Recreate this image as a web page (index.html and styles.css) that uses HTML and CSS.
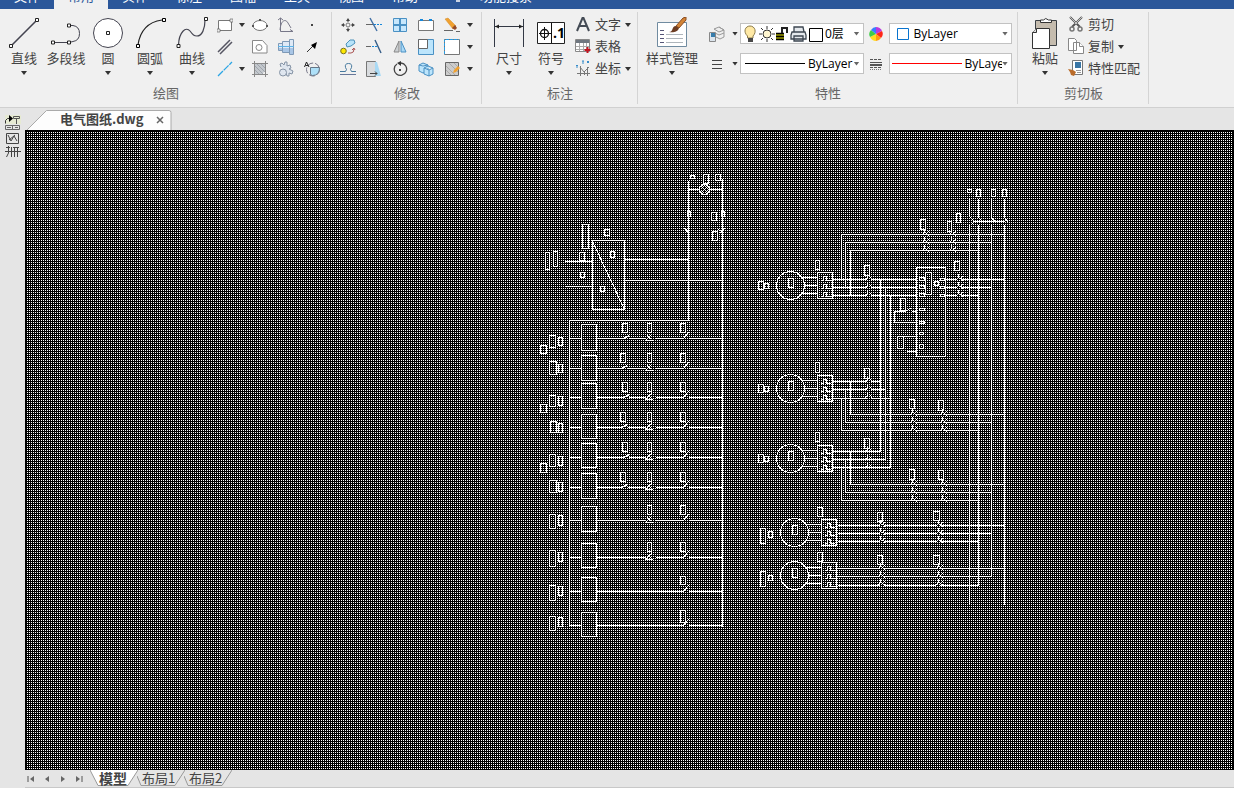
FILE: index.html
```html
<!DOCTYPE html>
<html lang="zh-CN">
<head>
<meta charset="utf-8">
<title>电气图纸.dwg</title>
<link rel="stylesheet" href="styles.css">
</head>
<body>
<nav class="menu">
  <button>文件</button><button class="current">常用</button><button>实体</button><button>标注</button><button>图幅</button><button>工具</button><button>视图</button><button>帮助</button>
  <svg width="12" height="12" viewBox="0 0 12 12"><path d="M6 1a3.500 3.500 0 0 1 2 6v3H4V7a3.500 3.500 0 0 1 2-6" fill="#c9d3e4"/></svg>
  <span>功能搜索</span>
</nav>

<header class="ribbon">
  <section class="group draw">
    <div class="tools">
      <button class="big"><svg width="32" height="32" viewBox="0 0 32 32"><path d="M4 28 28 4" stroke="#444450" stroke-width="1.600"/><path d="M1.500 27.500h3v3h-3zM27.500 1.500h3v3h-3z" fill="#fff" stroke="#222"/></svg><span>直线</span><i class="caret"></i></button>
      <button class="big"><svg width="32" height="32" viewBox="0 0 32 32" fill="none"><path d="M4 25.500h15M19 8.500h4q6.500 1 6.500 8t-6.500 8l-4 1" stroke="#444450"/><path d="M1.500 24h3v3h-3zM17.500 24h3v3h-3zM17.500 7h3v3h-3z" fill="#fff" stroke="#222"/></svg><span>多段线</span></button>
      <button class="big"><svg width="32" height="32" viewBox="0 0 32 32"><circle cx="16" cy="16" r="14.500" fill="#fff" stroke="#444450"/><path d="M14.500 14.500h3v3h-3z" fill="#fff" stroke="#222"/></svg><span>圆</span><i class="caret"></i></button>
      <button class="big"><svg width="32" height="32" viewBox="0 0 32 32" fill="none"><path d="M4 28C6 14 14 5 28 3" stroke="#222" stroke-width="1.200"/><path d="M2.500 27.500h3v3h-3zM28.500 1.500h3v3h-3z" fill="#fff" stroke="#000"/></svg><span>圆弧</span><i class="caret"></i></button>
      <button class="big"><svg width="32" height="32" viewBox="0 0 32 32" fill="none"><path d="M2.500 28C3 15 10 9 14 14c3 4 4 5 7 5 5 0 8-7 8-16" stroke="#444450" stroke-width="1.200"/><path d="M1 27.500h3v3H1zM28.500.5h3v3h-3z" fill="#fff" stroke="#222"/></svg><span>曲线</span><i class="caret"></i></button>
      <div class="grid grid-draw">
        <button><svg width="16" height="16" viewBox="0 0 16 16"><path d="M1.500 3.500h13v10h-13z" fill="#fff" stroke="#777"/><path d="M0 12h3v3H0zM13 2h3v3h-3z" fill="#eee" stroke="#555" stroke-width=".6"/></svg></button><i class="caret"></i>
        <button><svg width="16" height="16" viewBox="0 0 16 16"><ellipse cx="8" cy="8.500" rx="7" ry="5" fill="#fff" stroke="#777"/><path d="M7 2h2v2H7zM0 8h2v2H0zM14 8h2v2h-2z" fill="#555"/></svg></button>
        <button><svg width="16" height="16" viewBox="0 0 16 16" fill="none" stroke="#778"><path d="M2.500 1v13.500H15M0 3l2.500-2L5 3M2 13C3 2 8 2 10 6l3 5M12 12.500l3 2"/></svg></button>
        <button><svg width="16" height="16" viewBox="0 0 16 16"><path d="M7 7h2v2H7z" fill="#444"/></svg></button>
        <button><svg width="16" height="16" viewBox="0 0 16 16" fill="none" stroke="#555562" stroke-width="1.500"><path d="M1 13 13 1M3 15 15 3"/></svg></button><i></i>
        <button><svg width="16" height="16" viewBox="0 0 16 16" fill="#fff" stroke="#888"><path d="M.5 1.500h10l4.500 5v7.500H.5z"/><circle cx="7" cy="8.500" r="3"/></svg></button>
        <button><svg width="16" height="16" viewBox="0 0 16 16"><path d="M.5 4.500h4v7h-4zM4.500 2.500h7v11h-7zM11.500 .5h4v15h-4z" fill="#dfeaf6" stroke="#7e99b6"/><path d="M1 9h3v2H1zM5 9h6v4H5zM12 9h3v6h-3z" fill="#a9c6e6"/><path d="M0 7.500h16" stroke="#5cb3e8"/></svg></button>
        <button><svg width="16" height="16" viewBox="0 0 16 16"><path d="m3 13 6-6" stroke="#333"/><path d="m13 3-2 7-4-4z" fill="#000"/></svg></button>
        <button><svg width="16" height="16" viewBox="0 0 16 16"><path d="M1 15 15 1" stroke="#2aa5e5" stroke-width="1.300" stroke-dasharray="7 1"/></svg></button><i class="caret"></i>
        <button><svg width="16" height="16" viewBox="0 0 16 16"><path d="M3 3h10v7l-3 3H3z" fill="#c3c8cd"/><path d="M0 2.500h16M2.500 0v16M0 13.500h16M13.500 0v16" stroke="#888"/><path d="m3 5 8 8M5 3l8 8M9 3l4 4M3 9l4 4" stroke="#8f959d" stroke-width=".7"/></svg></button>
        <button><svg width="16" height="16" viewBox="0 0 16 16" fill="#dfe6ef" stroke="#8593a5"><path d="M3 6 2 3l2-1 2 2 1-3h2v4l3-1 1 3-2 1 4 2-1 3-3-1v3H9l-1-3"/><circle cx="5" cy="11.500" r="3.500"/></svg></button>
        <button><svg width="16" height="16" viewBox="0 0 16 16"><circle cx="9" cy="8.500" r="6.500" fill="none" stroke="#778" stroke-dasharray="6 2"/><path d="M6.500 6.500h9q0 8-7 8l-2-1z" fill="#aee0f8" stroke="#678"/><path d="m.5 6 2-5 2.500 5M1.500 4.500h3" fill="none" stroke="#222"/></svg></button>
      </div>
    </div>
    <h2>绘图</h2>
  </section>

  <section class="group modify">
    <div class="tools">
      <div class="grid grid-modify">
        <button><svg width="16" height="16" viewBox="0 0 16 16"><path d="M8 1 6 4h4zM8 15l-2-3h4zM1 8l3-2v4zM15 8l-3-2v4z" fill="#444"/><path d="M8 3v2M8 11v2M3 8h2M11 8h2" stroke="#444"/><circle cx="8" cy="8" r="2" fill="none" stroke="#777"/></svg></button>
        <button><svg width="16" height="16" viewBox="0 0 16 16"><path d="M0 7.500h7" stroke="#666"/><path d="M8 7.500h8" stroke="#1687d9" stroke-dasharray="2 1"/><path d="m4 1 7 13" stroke="#3f6ea3" stroke-width="1.400"/></svg></button>
        <button><svg width="16" height="16" viewBox="0 0 16 16"><path d="M1.500 1.500h13v13h-13z" fill="#c7e7fc" stroke="#4a91c4"/><path d="M8 1v14M1 8h14" stroke="#4a91c4" stroke-width="2"/></svg></button>
        <button><svg width="16" height="16" viewBox="0 0 16 16"><path d="M3 3.500H.5v10h15v-10H13M5 3.500h6" fill="#fff" stroke="#777"/><path d="M2 2h3v2H2zM11 2h3v2h-3z" fill="#1687d9"/></svg></button>
        <button><svg width="16" height="16" viewBox="0 0 16 16"><path d="m1 2 3-1 8 8-3 3z" fill="#f0a130" stroke="#d28a2a" stroke-width=".5"/><path d="m8 11 3-3 2 3-2 2z" fill="#944b28"/><path d="M0 13.500h9M12 14.500h4" stroke="#666"/></svg></button><i class="caret"></i>
        <button><svg width="16" height="16" viewBox="0 0 16 16"><circle cx="3.500" cy="12" r="2.800" fill="#ffe900" stroke="#777021"/><path d="m6 5 4-4h4l1 3-4 3-4 1z" fill="#b8e4fa" stroke="#4c92bb"/><path d="M8 14h3q3 0 3-4m-2 1 2-2 1 2" fill="none" stroke="#a55"/></svg></button>
        <button><svg width="16" height="16" viewBox="0 0 16 16"><path d="M0 7.500h5" stroke="#666"/><path d="M6 7.500h5" stroke="#1687d9" stroke-dasharray="2 1"/><path d="m9 1 6 13" stroke="#345c86" stroke-width="1.400"/></svg></button>
        <button><svg width="16" height="16" viewBox="0 0 16 16"><path d="M7 2v11H2z" fill="#cbcfd2" stroke="#888"/><path d="M9 2v11h5z" fill="#a9d8f6" stroke="#4a91c4"/></svg></button>
        <button><svg width="16" height="16" viewBox="0 0 16 16"><path d="M.5.5h15v15H.5z" fill="#bce5fc" stroke="#4a91c4"/><path d="M.5.5h9v9h-9z" fill="#fff" stroke="#666"/></svg></button>
        <button><svg width="16" height="16" viewBox="0 0 16 16"><path d="M.5.5h15v15H.5z" fill="#fff" stroke="#777"/><path d="M.5 15V.5H15" fill="none" stroke="#2b9be0" stroke-dasharray="3 1"/></svg></button><i class="caret"></i>
        <button><svg width="16" height="16" viewBox="0 0 16 16" fill="none"><path d="M0 10.500h5.500q2-2 0-4-1-4 3-4t3 4q-2 2 0 4H16" stroke="#45799e"/><path d="M0 13.500h16" stroke="#679"/></svg></button>
        <button><svg width="16" height="16" viewBox="0 0 16 16"><path d="M.5.5h9v15h-9z" fill="#d9dcdf" stroke="#777"/><path d="M9 1h2l4 14H9z" fill="#a9daf5"/><path d="M4 12.500h7m-2-2 2 2-2 2" stroke="#444" fill="none"/></svg></button>
        <button><svg width="16" height="16" viewBox="0 0 16 16" fill="none"><path d="M9 2a6.200 6.200 0 1 1-4 1" stroke="#444" stroke-width="1.300"/><path d="M9 0v5L5 2z" fill="#333"/><path d="M7 8h2v2H7z" fill="#444"/></svg></button>
        <button><svg width="16" height="16" viewBox="0 0 16 16" fill="#bce5fc" stroke="#4a91c4"><path d="m1 4 4-2 5 2v6l-5 2-4-2zM1 4l4 1 5-1"/><path d="m6 7 4-2 5 2v6l-4 2-5-2zM6 7l5 2 4-2M11 9v6"/></svg></button>
        <button><svg width="16" height="16" viewBox="0 0 16 16"><path d="M1.500 1.500h13v13h-13z" fill="#ccc" stroke="#666"/><path d="m2 5 9 9M5 2l9 9M2 9l5 5M10 2l4 4" stroke="#aaa"/><path d="m9 12 1-3 4-4 2 2-4 4z" fill="#f0a130"/></svg></button><i class="caret"></i>
      </div>
    </div>
    <h2>修改</h2>
  </section>

  <section class="group annotate">
    <div class="tools">
      <button class="big"><svg width="32" height="32" viewBox="0 0 32 32"><path d="M1.500 2v28M30.500 2v28M2 9.500h28" stroke="#333945"/><path d="m2 9.500 4-2v4zM30 9.500l-4-2v4z" fill="#222"/></svg><span>尺寸</span><i class="caret"></i></button>
      <button class="big"><svg width="32" height="32" viewBox="0 0 32 32"><path d="M2.500 5.500h27v21h-27z" fill="#fff" stroke="#222"/><path d="M16.500 6v20M4 16.500h12M9.500 10v13" stroke="#111"/><circle cx="9.500" cy="16.500" r="4" fill="none" stroke="#111" stroke-width="1.300"/><text x="18" y="21" class="one">.1</text></svg><span>符号</span><i class="caret"></i></button>
      <div class="list">
        <button><svg width="16" height="16" viewBox="0 0 16 16"><path d="m2 15 5.500-13h1L14 15M4 10h8" fill="none" stroke="#444b55" stroke-width="2"/></svg>文字<i class="caret"></i></button>
        <button><svg width="16" height="16" viewBox="0 0 16 16"><path d="M.5 1.500h14v12H.5z" fill="#fff" stroke="#888"/><path d="M1 2h13v3H1z" fill="#6f7780"/><path d="M1 8.500h13M1 11.500h13M4.500 5v8M8.500 5v8M11.500 5v8" stroke="#aaa"/><path d="M12.500 9v6M9.500 12h6" stroke="#c21420" stroke-width="2"/></svg>表格</button>
        <button><svg width="16" height="16" viewBox="0 0 16 16" fill="none"><path d="M5.500 6v10M2 13.500h13M5 7l4 5 5-5M9.500 12v3M12.500 7v9" stroke="#777"/><path d="m1 5 1 1 1-1M2 6v2M7 1h2M8 1v3M12 1l2 2M14 1l-2 2" stroke="#378cca"/></svg>坐标<i class="caret"></i></button>
      </div>
    </div>
    <h2>标注</h2>
  </section>

  <section class="group properties">
    <div class="tools">
      <button class="big wide"><svg width="32" height="32" viewBox="0 0 32 32"><path d="M1.500 5.500h29v24h-29z" fill="#fff" stroke="#708ba0"/><path d="M4 13.500h4M4 17.500h4M4 21.500h4M4 25.500h4" stroke="#557"/><path d="M10 17.500h17M10 21.500h17M10 25.500h17" stroke="#aeb5bb"/><path d="m20 9 7-8 3-1v3l-7 8z" fill="#d28436" stroke="#8c4c20"/><path d="M13 15c5 0 2-6 7-6l3 2c-1 4-6 5-10 4" fill="#6c3c22"/></svg><span>样式管理</span><i class="caret"></i></button>
      <div class="props">
        <button class="pick"><svg width="16" height="16" viewBox="0 0 16 16"><path d="m5 3 5-2 5 3-5 2zM6 7l4 2 5-2M7 11l4 2 4-2M10 1l5 3v7" fill="#eee" stroke="#999"/><path d="M.5 6.500h6v9h-6z" fill="#dce5ed" stroke="#888"/><path d="M2 7h4v4H2z" fill="#367cab"/></svg><i class="caret"></i></button>
        <div class="combo"><svg class="layer" width="82" height="18" viewBox="0 0 82 18"><path d="M4.500 11C0 7 2 1 7 1s7 6 3 10v2H4.500z" fill="#ffe9a5" stroke="#8c7c4c"/><path d="M5 13h5v4H5z" fill="#484848"/><circle cx="24" cy="9" r="4" fill="#fff6d0" stroke="#333"/><path d="M24 1v3M24 14v3M16 9h3M29 9h3M18 3l2 2M28 13l2 2M30 3l-2 2M20 13l-2 2" stroke="#333"/><path d="M33 8h8v7h-8z" fill="#999900"/><path d="M33 8.500h8M33 11.500h8M33 14.500h8" stroke="#000" stroke-width="1.500"/><path d="M39 8V3h5v5" fill="none" stroke="#222" stroke-width="2"/><path d="M51 7V2h9l1 5M49 7h13l1 3v4H48v-4zM51 11h9v5h-9z" fill="#e4e8ec" stroke="#3c4650" stroke-width="1.300"/><path d="M66.500 3.500h13v13h-13z" fill="#fff" stroke="#000"/></svg><select aria-label="图层"><option>0层</option></select><i class="caret"></i></div>
        <svg class="mid" width="14" height="14" viewBox="0 0 14 14"><path d="M7 7V0a7 7 0 0 1 6 4z" fill="#bb39dd"/><path d="m7 7 6-3q2 4-1 7z" fill="#ff2617"/><path d="m7 7 5 4q-2 3-5 3z" fill="#ff9b11"/><path d="M7 7v7q-4 0-6-4z" fill="#ffdc20"/><path d="M7 7 1 10q-2-4 1-7z" fill="#3ecd45"/><path d="M7 7 2 3q2-3 5-3z" fill="#377dff"/></svg>
        <div class="combo"><svg class="swatch" width="14" height="14" viewBox="0 0 14 14"><path d="M1.500 1.500h11v11h-11z" fill="#fff" stroke="#0873ce"/></svg><select aria-label="颜色"><option>ByLayer</option></select><i class="caret"></i></div>
        <button class="pick"><svg width="16" height="16" viewBox="0 0 16 16"><path d="M3 4.500h10M3 8.500h10M3 12.500h10" stroke="#444"/></svg><i class="caret"></i></button>
        <div class="combo"><span class="stroke black"></span><select class="line-type" aria-label="线型"><option>ByLayer</option></select><i class="caret"></i></div>
        <svg class="mid" width="14" height="14" viewBox="0 0 14 14"><path d="M1 2.500h12M1 10.500h12" stroke="#555" stroke-dasharray="3 1"/><path d="M1 5.500h12" stroke="#555"/><path d="M1 8h12" stroke="#555" stroke-width="2"/><path d="M1 12.500h12" stroke="#777" stroke-dasharray="1 1"/></svg>
        <div class="combo"><span class="stroke red"></span><select class="line-weight" aria-label="线宽"><option>ByLayer</option></select><i class="caret"></i></div>
      </div>
    </div>
    <h2>特性</h2>
  </section>

  <section class="group clipboard">
    <div class="tools">
      <button class="big"><svg width="32" height="32" viewBox="0 0 32 32"><path d="M6.500 3.500h21v25h-21z" fill="#c5bcae" stroke="#3b4045"/><path d="M11.500 5.500V3h3q2-3 5 0h3v2.500z" fill="#fff" stroke="#333"/><path d="m3.500 15.500 4-4h13v20h-17z" fill="#fff" stroke="#333"/><path d="M3.500 15.500h4v-4" fill="#ddd" stroke="#333"/></svg><span>粘贴</span><i class="caret"></i></button>
      <div class="list">
        <button><svg width="16" height="16" viewBox="0 0 16 16"><path d="m2 1 10 10M14 1 4 11" stroke="#555" stroke-width="2"/><path d="m2 1 7 7M14 1 7 8" stroke="#ddd" stroke-width=".8"/><circle cx="4" cy="13" r="2" fill="none" stroke="#777" stroke-width="1.500"/><circle cx="12" cy="13" r="2" fill="none" stroke="#777" stroke-width="1.500"/></svg>剪切</button>
        <button><svg width="16" height="16" viewBox="0 0 16 16" fill="#fff" stroke="#888"><path d="M.5.5h6l2 2v10h-8zM5.500 4.500h6l4 4v7h-10z"/><path d="M11.500 4.500v4h4"/></svg>复制<i class="caret"></i></button>
        <button><svg width="16" height="16" viewBox="0 0 16 16"><path d="M4.500.5h10v14h-10z" fill="#fff" stroke="#777"/><path d="M7 2h6v6H7z" fill="#3875a5"/><path d="M8 10.500h5M9 12.500h4" stroke="#999"/><path d="m0 9 5 1 3 2-2 4-3-1-1-3z" fill="#b96b29"/></svg>特性匹配</button>
      </div>
    </div>
    <h2>剪切板</h2>
  </section>
</header>

<main class="workspace">
  <aside class="rail">
    <svg width="16" height="42" viewBox="0 0 16 42" fill="none" stroke="#333"><path d="M0 0h16v9H0z" fill="#e6ead3" stroke="none"/><path d="M.5 8.500v-3l2-2H5"/><path d="M4 0v7l4-3.500z" fill="#000" stroke="none"/><path d="M8.500 1.500h6v2h-6zM11.500 4v5" stroke="#555"/><path d="M.5 10.500h14v4H.5zM2 12.500h4M10 12.500h3M7.500 11v3" stroke="#666"/><path d="M1.500 18.500h12v10h-12zM3 20l3 6 3-5 3 5M4 25l6-5" stroke="#444"/><path d="M1 32.500h4M8 32.500h6M0 36.500h16M3.500 31v7l-2 4M6.500 32v10M9.500 32v10M12.500 32v10" stroke="#444"/></svg>
  </aside>
  <div class="document">
    <div class="file-tabs">
      <div class="file-tab"><svg viewBox="0 0 146 20" preserveAspectRatio="none"><path d="M.5 20.500 20.500.5H143q2 0 2 2v18" fill="#fdfdfd" stroke="#aaa"/></svg><span>电气图纸.dwg</span><button aria-label="关闭"><svg width="8" height="8" viewBox="0 0 8 8"><path d="m1 1 6 6M7 1 1 7" stroke="#666" stroke-width="1.500"/></svg></button></div>
    </div>
    <div class="canvas">
      <svg width="1209" height="640" viewBox="24.500 129.500 1209 640" class="schematic">
        <defs>
          <g id="motor">
            <circle r="14"/>
            <path d="M-2-7h5v9h-5zM12-8h15M14 0h13M12 8h15M27-13h15v26H27zM32-9h4v4h4M30-5h3v-4M32-1h4v4h4M30 3h3v-4M32 7h4v4h4M30 11h3V7"/>
          </g>
          <path id="tag" d="M-32-4h5v8h-5zM-26-2h4v5h-4z"/>
          <path id="sw" d="M-4 0h3l6-3"/>
          <path id="xsw" d="M-5 2h8M-2 0l4-4M-2-3l4 4M-5 3l3-3"/>
          <path id="ksw" d="M-1 0l5-6"/>
          <path id="poles" d="M0-6v4l-3 3M1 0l3-3M0 2v4l-3 3M1 8l3-3M0 10v4l-3 3M1 16l3-3M4-1v2M4 7v2M4 15v2"/>
        </defs>
        <path d="M688 180v140M722 178v448M688 189h11M709 189h13M690 175h4v3h-4zM703 174h5v9h-5zM715 174h5v6h-5zM701 192l6-6M701 188l3-3M704 193l4-4M687 211h3v5h-3zM711 212h5v8h-5zM721 211h3v5h-3zM712 231h5v9h-5zM684 228l5 4M685 232l3-3M719 233l5-5M718 229l5 3"/>
        <circle cx="704" cy="189" r="5"/>
        <path d="M592 240h32v69h-32zM592 241l32 68M582 224h6v24h-6zM604 229h5v6h-5zM545 252h4v17h-4zM553 251h4v15h-4zM579 252h5v8h-5zM580 272h4v5h-4zM610 251h4v6h-4zM600 286h4v5h-4zM564 261h28M564 286h28M624 259h64M624 280h98M569 625V320h119"/>
        <path d="M581 324h15v26h-15zM581 355h15v25h-15zM581 383h15v25h-15zM581 414h15v24h-15zM581 443h15v24h-15zM581 473h15v25h-15zM581 506h15v25h-15zM581 543h15v24h-15zM581 577h15v24h-15zM581 612h15v24h-15z"/>
        <path d="M569 338h12m15 0h25m7 0h17m10 0h28m5 0h34M569 368h12m15 0h24m7 0h18m10 0h28m5 0h34M569 397h12m15 0h25m7 0h17m10 0h28m5 0h34M569 427h12m15 0h24m7 0h18m10 0h28m5 0h34M569 457h12m15 0h25m7 0h17m10 0h28m5 0h34M569 487h12m15 0h24m7 0h18m10 0h28m5 0h34M569 520h12m15 0h49m10 0h28m5 0h34M569 557h12m15 0h49m10 0h28m5 0h34M569 591h12m15 0h87m5 0h34M569 625h12m15 0h87m5 0h34"/>
        <path d="M549 335h6v12h-6zM549 361h7v13h-7zM549 395h6v11h-6zM550 421h6v11h-6zM549 454h6v12h-6zM549 480h7v12h-7zM549 514h6v14h-6zM549 550h6v16h-6zM549 585h6v15h-6zM549 616h6v14h-6zM558 337h4v8h-4zM558 364h4v8h-4zM558 396h4v9h-4zM558 423h4v9h-4zM558 456h4v9h-4zM558 482h4v9h-4zM558 515h4v10h-4zM558 552h4v9h-4zM558 586h4v9h-4zM558 617h4v9h-4zM540 345h6v8h-6zM540 404h6v8h-6zM540 463h6v9h-6z"/>
        <path d="M622 323h5v9h-5zM620 353h5v9h-5zM622 382h5v9h-5zM620 412h5v9h-5zM622 442h5v9h-5zM620 472h5v9h-5zM647 323h4v9h-4zM647 353h4v9h-4zM647 382h4v9h-4zM647 412h4v9h-4zM647 442h4v9h-4zM647 472h4v9h-4zM647 505h4v9h-4zM647 542h4v9h-4zM680 323h5v9h-5zM680 353h5v9h-5zM680 382h5v9h-5zM680 412h5v9h-5zM680 442h5v9h-5zM680 472h5v9h-5zM680 505h5v9h-5zM680 542h5v9h-5zM680 576h5v8h-5zM680 610h5v12h-5z"/>
        <use href="#sw" x="624" y="338"/><use href="#sw" x="622" y="368"/><use href="#sw" x="624" y="397"/><use href="#sw" x="622" y="427"/><use href="#sw" x="624" y="457"/><use href="#sw" x="622" y="487"/>
        <use href="#xsw" x="649" y="338"/><use href="#xsw" x="649" y="368"/><use href="#xsw" x="649" y="397"/><use href="#xsw" x="649" y="427"/><use href="#xsw" x="649" y="457"/><use href="#xsw" x="649" y="487"/><use href="#xsw" x="649" y="520"/><use href="#xsw" x="649" y="557"/>
        <use href="#ksw" x="684" y="338"/><use href="#ksw" x="684" y="368"/><use href="#ksw" x="684" y="397"/><use href="#ksw" x="684" y="427"/><use href="#ksw" x="684" y="457"/><use href="#ksw" x="684" y="487"/><use href="#ksw" x="684" y="520"/><use href="#ksw" x="684" y="557"/><use href="#ksw" x="684" y="591"/><use href="#ksw" x="684" y="625"/>
        <path d="M969 198v18m0 8v380M978 198v18m0 8v361M991 198v18m0 8v352M1004 198v18m0 8v380M972 221h32M969 216l4 4M978 217l4 4M974 221l-3 3M991 217l4 5M1004 217l4 5M967 189h4v3h-4zM976 189h4v7h-4zM991 189h4v7h-4zM1002 189h4v7h-4z"/>
        <path d="M841 279v-45h163M845 287v-45h146M850 295v-45h128M920 219h5v10h-5zM947 221h4v10h-4zM956 213h4v9h-4zM815 260h4v9h-4zM864 265h5v10h-5zM954 261h5v9h-5z"/>
        <path d="M832 279h34m4 0h46M832 287h34m4 0h46M832 295h34m4 0h46M945 279h11m4 0h44M945 287h11m4 0h31M945 295h11m4 0h18M880 279v172h-48M885 287v172h-53M890 295v172h-58"/>
        <path d="M916 267h29v89h-29zM925 272h6v22h-6zM919 277h5v3h-5zM919 285h5v3h-5zM919 293h5v3h-5zM934 281h4v4h-4zM940 278h4v2h-4zM940 286h4v2h-4zM940 294h4v2h-4zM919 308h5v2h-5zM919 321h5v2h-5zM919 332h4v2h-4zM919 344h4v4h-4zM900 298h5v12h-5zM916 311h-5m-6 0h-11v11h22M905 311l6-4M897 336h6v12h-6zM903 336h13M906 351h10"/>
        <path d="M832 381h34m4 0h10M832 389h34m4 0h15M832 398h34m4 0h20M850 381v33h60m4 0h25m4 0h61M845 389v33h65m4 0h25m4 0h48M841 398v32h69m4 0h25m4 0h35M850 451v33h154M845 459v33h146M841 467v33h137M815 362h4v10h-4zM864 368h5v10h-5zM815 432h4v9h-4zM864 438h5v10h-5zM909 399h5v9h-5zM938 400h5v10h-5zM909 469h5v10h-5zM938 470h5v9h-5z"/>
        <path d="M837 525h42m4 0h52m4 0h65M837 533h42m4 0h52m4 0h52M837 541h42m4 0h52m4 0h39M837 568h42m4 0h52m4 0h65M837 576h42m4 0h52m4 0h52M837 585h42m4 0h52m4 0h39M817 507h5v9h-5zM817 552h5v9h-5zM877 512h5v9h-5zM933 511h6v9h-6zM877 555h5v9h-5zM933 555h6v9h-6zM760 528h5v15h-5zM768 531h4v6h-4zM760 571h5v15h-5zM768 575h4v5h-4z"/>
        <use href="#motor" x="790" y="285"/><use href="#motor" x="790" y="388"/><use href="#motor" x="790" y="458"/><use href="#motor" x="794" y="532"/><use href="#motor" x="794" y="575"/>
        <use href="#tag" x="790" y="285"/><use href="#tag" x="790" y="388"/><use href="#tag" x="790" y="458"/>
        <use href="#poles" x="924" y="234"/><use href="#poles" x="951" y="234"/><use href="#poles" x="867" y="279"/><use href="#poles" x="958" y="279"/><use href="#poles" x="867" y="381"/><use href="#poles" x="867" y="451"/><use href="#poles" x="912" y="414"/><use href="#poles" x="942" y="414"/><use href="#poles" x="912" y="484"/><use href="#poles" x="942" y="484"/><use href="#poles" x="880" y="525"/><use href="#poles" x="938" y="525"/><use href="#poles" x="880" y="568"/><use href="#poles" x="938" y="568"/>
      </svg>
    </div>
    <footer class="sheets">
      <div class="steps">
        <button aria-label="第一个"><svg width="8" height="8" viewBox="0 0 8 8"><path d="M1 1v6" stroke="#555"/><path d="M7 1v6L3 4z" fill="#666"/></svg></button>
        <button aria-label="上一个"><svg width="8" height="8" viewBox="0 0 8 8"><path d="M6 1v6L2 4z" fill="#666"/></svg></button>
        <button aria-label="下一个"><svg width="8" height="8" viewBox="0 0 8 8"><path d="M2 1v6l4-3z" fill="#666"/></svg></button>
        <button aria-label="最后一个"><svg width="8" height="8" viewBox="0 0 8 8"><path d="M1 1v6l4-3z" fill="#666"/><path d="M7 1v6" stroke="#555"/></svg></button>
      </div>
      <button class="sheet active"><svg viewBox="0 0 48 16" preserveAspectRatio="none"><path d="m0 0 8 15.500h30L48 0" fill="#fff" stroke="#999"/></svg><span>模型</span></button>
      <button class="sheet"><svg viewBox="0 0 48 16" preserveAspectRatio="none"><path d="m0 6 4 9.500h34L48 0" fill="none" stroke="#999"/></svg><span>布局1</span></button>
      <button class="sheet"><svg viewBox="0 0 48 16" preserveAspectRatio="none"><path d="m0 6 4 9.500h34L48 0" fill="none" stroke="#999"/></svg><span>布局2</span></button>
    </footer>
  </div>
</main>
</body>
</html>
```
FILE: styles.css
```css
* { box-sizing: border-box; }
body {
  margin: 0;
  height: 100vh;
  display: flex;
  flex-direction: column;
  overflow: hidden;
  background: #e5e5e5;
  color: #444;
  font: 13px/16px "Noto Sans CJK SC", sans-serif;
}
button {
  margin: 0;
  padding: 0;
  border: 0;
  background: none;
  color: inherit;
  font: inherit;
}
svg { display: block; flex: none; }

.menu {
  flex: none;
  height: 9px;
  display: flex;
  align-items: flex-end;
  overflow: hidden;
  background: #2b579a;
  color: #fff;
}
.menu button { width: 54px; height: 20px; padding-bottom: 6px; line-height: 14px; }
.menu .current { background: #f0f0f0; color: #2b579a; }
.menu svg { margin: 0 16px 5px 20px; }
.menu span { height: 20px; line-height: 14px; }

.ribbon {
  flex: none;
  display: flex;
  background: #f0f0f0;
  border-bottom: 1px solid #d0d0d0;
}
.group { padding: 5px 3px 6px; position: relative; }
.group::after {
  content: "";
  position: absolute;
  top: 3px;
  right: 0;
  bottom: 3px;
  width: 1px;
  background: #d4d4d4;
}
.draw { width: 332px; }
.modify { width: 150px; }
.annotate { width: 156px; }
.properties { width: 380px; }
.clipboard { width: 131px; }
.group h2 {
  margin: 2px 0 0;
  font-size: 13px;
  line-height: 16px;
  font-weight: 400;
  text-align: center;
  color: #666;
}
.tools { display: flex; height: 69px; }
.big {
  width: 42px;
  height: 66px;
  display: flex;
  flex: none;
  flex-direction: column;
  align-items: center;
  padding-top: 3px;
  white-space: nowrap;
}
.big span { margin-top: 1px; line-height: 16px; }
.big .caret { margin-top: 5px; }
.wide { width: 60px; }
.one { font: bold 14px "Open Sans", sans-serif; fill: #000; }
.caret {
  width: 6px;
  height: 4px;
  flex: none;
  background: #333;
  clip-path: polygon(0 0, 100% 0, 50% 100%);
}

.grid { display: grid; grid-auto-rows: 22px; align-items: center; justify-items: center; }
.grid-draw { grid-template-columns: 24px 10px 26px 26px 26px; }
.grid-modify { grid-template-columns: repeat(5, 26px) 10px; }
.list { display: flex; flex-direction: column; }
.list button {
  display: flex;
  align-items: center;
  gap: 4px;
  height: 22px;
  padding-bottom: 2px;
  white-space: nowrap;
}
.list .caret { margin-top: 2px; }
.annotate .tools { padding-left: 3px; }
.annotate .list { margin-left: 3px; }
.clipboard .list { margin-left: 2px; }
.clipboard .tools { padding-left: 3px; }

.props {
  flex: 1;
  display: grid;
  grid-template-columns: 36px 1fr 25px 1fr;
  grid-auto-rows: 30px;
  align-items: start;
  padding: 9px 3px 0 2px;
}
.properties .tools { padding-left: 1px; }
.pick { display: flex; align-items: center; gap: 7px; height: 21px; padding-left: 5px; }
.mid { justify-self: center; margin-top: 4px; }
.combo {
  display: flex;
  align-items: center;
  height: 21px;
  min-width: 0;
  padding: 0 3px 0 2px;
  border: 1px solid #c2c2c2;
  background: #fff;
}
.combo select {
  appearance: none;
  flex: 1;
  min-width: 0;
  margin: 0;
  padding: 0;
  border: 0;
  background: none;
  color: #000;
  font: 12px/18px "Open Sans", "Noto Sans CJK SC", sans-serif;
}
.combo .caret { background: #666; }
.combo .swatch { margin: 0 4px; }
.stroke { height: 1px; flex: none; margin-right: 3px; }
.black { width: 60px; margin-left: 2px; background: #000; }
.red { width: 70px; background: #f00; }
.line-weight { text-overflow: clip; }

.workspace { flex: 1; display: flex; min-height: 0; }
.rail { width: 25px; flex: none; padding: 7px 5px; }
.document { flex: 1; min-width: 0; display: flex; flex-direction: column; }
.file-tabs { flex: none; height: 22px; padding: 2px 0 0 1px; display: flex; }
.file-tab {
  position: relative;
  width: 146px;
  height: 20px;
  padding: 0 0 2px 34px;
  display: flex;
  align-items: center;
  gap: 12px;
}
.file-tab > svg, .sheet > svg { position: absolute; left: 0; top: 0; width: 100%; height: 100%; }
.file-tab span, .file-tab button, .sheet span { position: relative; }
.file-tab button { padding-top: 2px; }
.file-tab span { font-weight: 700; white-space: nowrap; }
.canvas {
  flex: 1;
  min-height: 0;
  overflow: hidden;
  background-color: #fff;
  background-image: linear-gradient(to right, transparent 1px, #000 1px), linear-gradient(#000 1px, transparent 1px);
  background-size: 2px 2px;
  background-position: 1px 0;
  border: 1px solid #000;
}
.schematic {
  margin: -1px;
  fill: none;
  stroke: #fff;
  stroke-width: 1px;
  shape-rendering: crispEdges;
}
.sheets { flex: none; height: 18px; display: flex; border-bottom: 1px solid #c8c8c8; }
.steps { display: flex; align-items: center; gap: 8px; padding: 0 7px 0 2px; }
.sheet {
  position: relative;
  width: 48px;
  height: 16px;
  padding-right: 5px;
  line-height: 14px;
  white-space: nowrap;
}
.sheet + .sheet { margin-left: -1px; }
.sheet.active { padding-right: 2px; font-weight: 700; font-size: 14px; }
```
